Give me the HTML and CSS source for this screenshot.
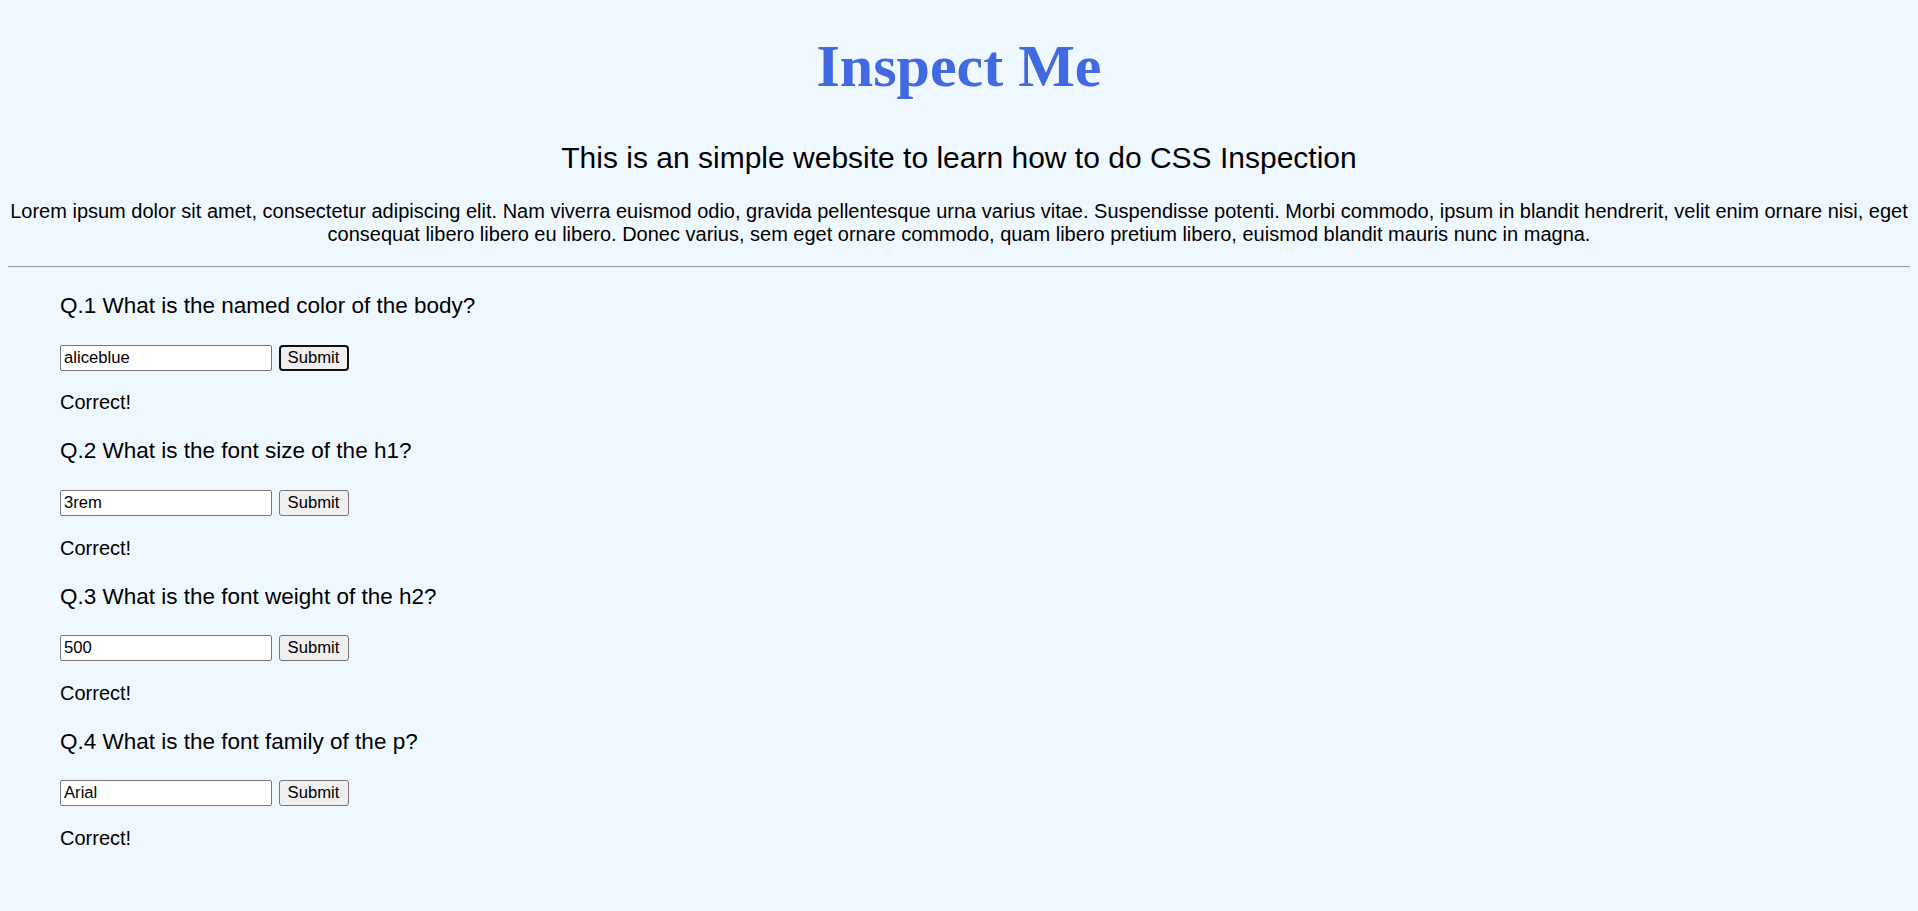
FILE: index.html
```html
<!DOCTYPE html>
<html lang="en">
<head>
<meta charset="utf-8">
<title>Inspect Me</title>
<link rel="stylesheet" href="styles.css">
</head>
<body>
<h1 class="title">Inspect Me</h1>
<h2 class="subtitle">This is an simple website to learn how to do CSS Inspection</h2>
<p class="intro">Lorem ipsum dolor sit amet, consectetur adipiscing elit. Nam viverra euismod odio, gravida pellentesque urna varius vitae. Suspendisse potenti. Morbi commodo, ipsum in blandit hendrerit, velit enim ornare nisi, eget consequat libero libero eu libero. Donec varius, sem eget ornare commodo, quam libero pretium libero, euismod blandit mauris nunc in magna.</p>
<hr class="divider">
<div class="quiz">
  <div class="question">
    <h3 class="q-text">Q.1 What is the named color of the body?</h3>
    <div class="answer-row">
      <input class="answer" type="text" value="aliceblue">
      <button class="submit submit-focused" type="button">Submit</button>
    </div>
    <p class="result">Correct!</p>
  </div>
  <div class="question">
    <h3 class="q-text">Q.2 What is the font size of the h1?</h3>
    <div class="answer-row">
      <input class="answer" type="text" value="3rem">
      <button class="submit" type="button">Submit</button>
    </div>
    <p class="result">Correct!</p>
  </div>
  <div class="question">
    <h3 class="q-text">Q.3 What is the font weight of the h2?</h3>
    <div class="answer-row">
      <input class="answer" type="text" value="500">
      <button class="submit" type="button">Submit</button>
    </div>
    <p class="result">Correct!</p>
  </div>
  <div class="question">
    <h3 class="q-text">Q.4 What is the font family of the p?</h3>
    <div class="answer-row">
      <input class="answer" type="text" value="Arial">
      <button class="submit" type="button">Submit</button>
    </div>
    <p class="result">Correct!</p>
  </div>
</div>
</body>
</html>
```
FILE: styles.css
```css
html {
  background: #f0f8ff;
}

body {
  margin: 8px;
  background: #f0f8ff;
  color: #000;
  font-family: "Liberation Sans", Arial, sans-serif;
}

.title {
  margin: 24px 0 40px;
  font-family: "Liberation Serif", "Times New Roman", serif;
  font-size: 60px;
  font-weight: bold;
  color: #4169e1;
  text-align: center;
}

.subtitle {
  margin: 0 0 25px;
  font-size: 30px;
  font-weight: 500;
  text-align: center;
}

.intro {
  margin: 0 0 20px;
  font-size: 20px;
  line-height: 23px;
  text-align: center;
}

.divider {
  margin: 0;
  height: 0;
  border: none;
  border-top: 1px solid #9a9a9a;
  border-bottom: 1px solid #eeeeee;
}

.quiz {
  padding-top: 1px;
  padding-left: 52px;
}

.question {
  display: flow-root;
}

.q-text {
  margin: 24px 0 0;
  font-size: 22.5px;
  font-weight: normal;
  line-height: normal;
}

.answer-row {
  display: flex;
  align-items: center;
  gap: 6.5px;
  margin: 25.5px 0 0;
}

.answer {
  box-sizing: border-box;
  width: 212px;
  height: 26px;
  margin: 0;
  padding: 1px 3px;
  background: #fff;
  border: 1px solid #767676;
  border-radius: 2px;
  font-family: "Liberation Sans", Arial, sans-serif;
  font-size: 16.67px;
  color: #000;
}

.submit {
  box-sizing: border-box;
  width: 70px;
  height: 26px;
  margin: 0;
  padding: 0;
  background: #efefef;
  border: 1px solid #767676;
  border-radius: 3px;
  font-family: "Liberation Sans", Arial, sans-serif;
  font-size: 16.67px;
  color: #000;
}

.submit-focused {
  border: 2px solid #101010;
  border-radius: 4px;
}

.result {
  margin: 20.8px 0 0;
  font-size: 20px;
  line-height: 23px;
}
```
